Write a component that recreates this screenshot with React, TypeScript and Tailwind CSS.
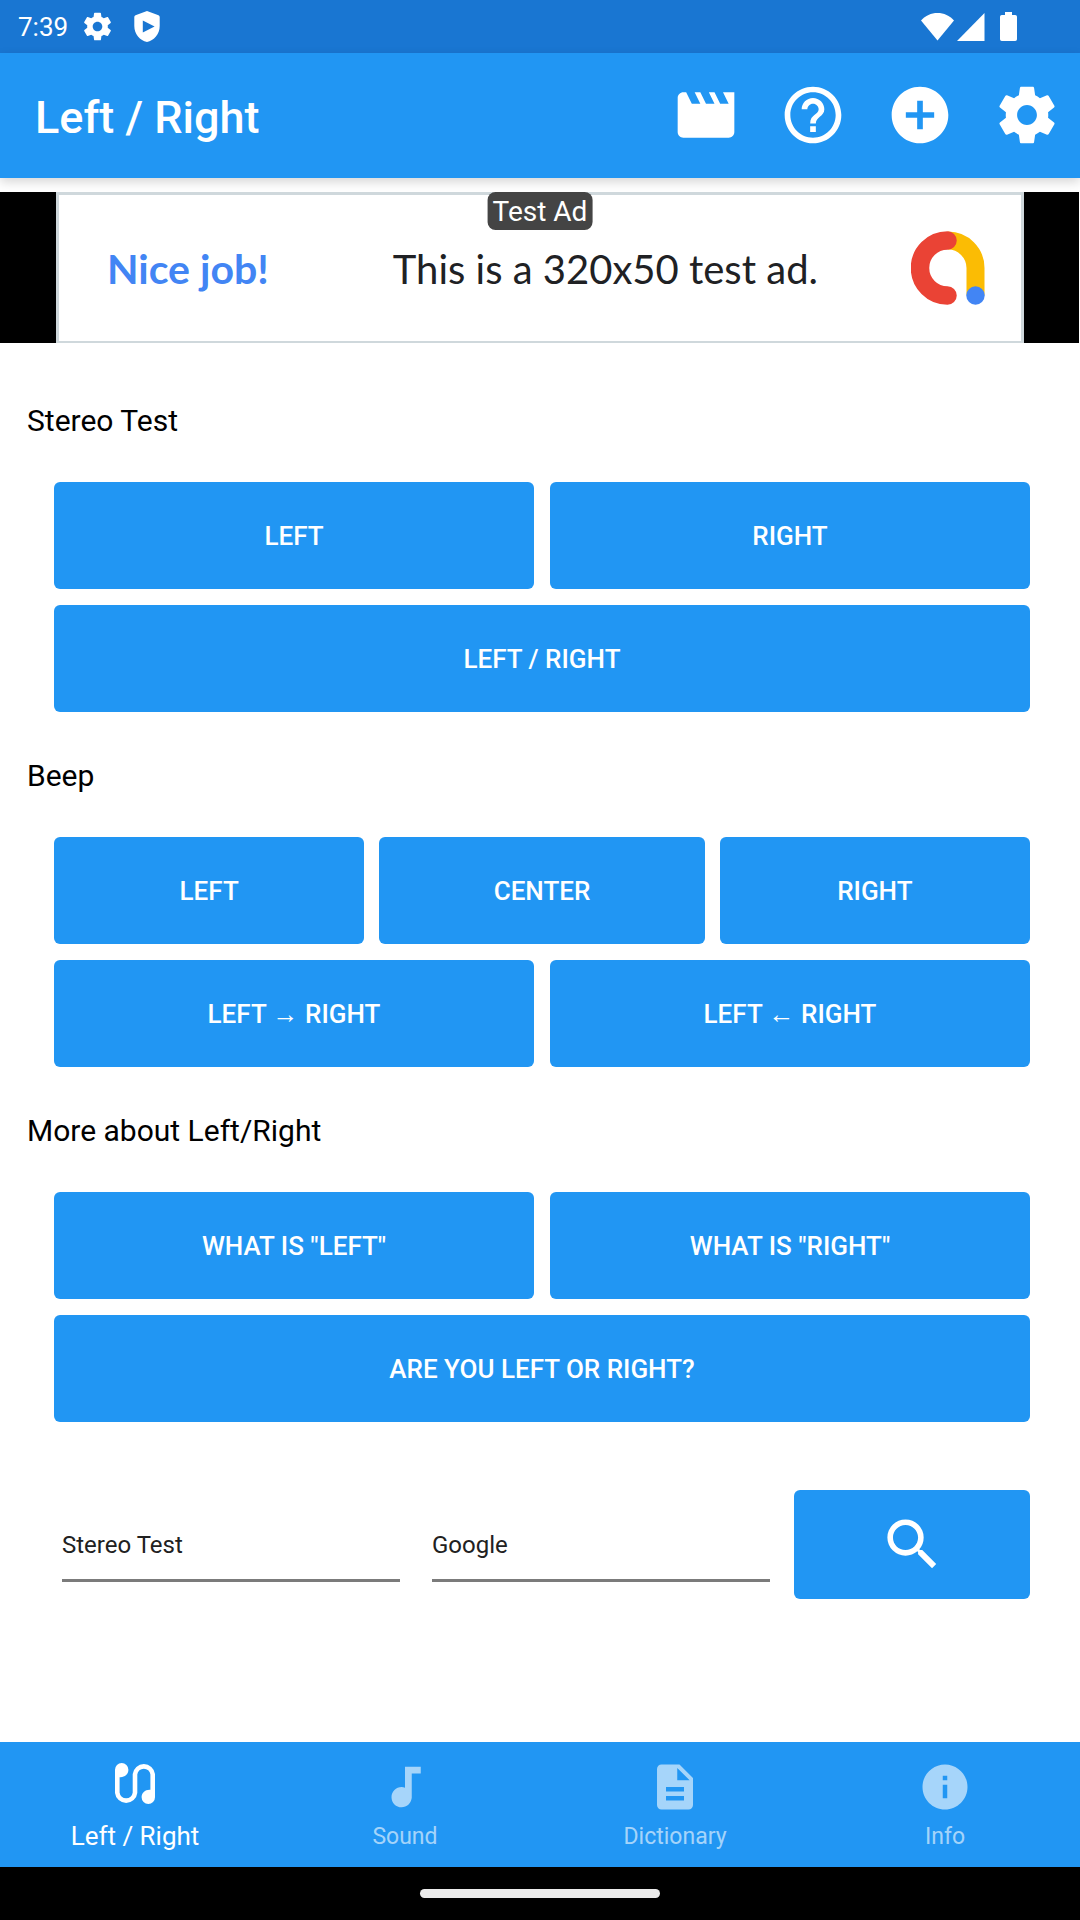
import type { ReactNode } from "react";
import {
  MdAddCircle,
  MdAudiotrack,
  MdDescription,
  MdHelpOutline,
  MdInfo,
  MdMovie,
  MdSearch,
} from "react-icons/md";

function GearIcon({ className }: { className: string }) {
  return (
    <svg viewBox="0 0 24 24" fill="currentColor" className={className} aria-hidden="true">
      <path d="M19.43 12.98c.04-.32.07-.64.07-.98s-.03-.66-.07-.98l2.11-1.65c.19-.15.24-.42.12-.64l-2-3.46c-.12-.22-.39-.3-.61-.22l-2.49 1c-.52-.4-1.08-.73-1.69-.98l-.38-2.65C14.46 2.18 14.25 2 14 2h-4c-.25 0-.46.18-.49.42l-.38 2.65c-.61.25-1.17.59-1.69.98l-2.49-1c-.23-.09-.49 0-.61.22l-2 3.46c-.13.22-.07.49.12.64l2.11 1.65c-.04.32-.07.65-.07.98s.03.66.07.98l-2.11 1.65c-.19.15-.24.42-.12.64l2 3.46c.12.22.39.3.61.22l2.49-1c.52.4 1.08.73 1.69.98l.38 2.65c.03.24.24.42.49.42h4c.25 0 .46-.18.49-.42l.38-2.65c.61-.25 1.17-.59 1.69-.98l2.49 1c.23.09.49 0 .61-.22l2-3.46c.12-.22.07-.49-.12-.64l-2.11-1.65zM12 15.5c-1.93 0-3.5-1.57-3.5-3.5s1.57-3.5 3.5-3.5 3.5 1.57 3.5 3.5-1.57 3.5-3.5 3.5z" />
    </svg>
  );
}

function ShieldPlayIcon() {
  return (
    <svg viewBox="0 0 26 31" fill="currentColor" className="h-[31px] w-[26px]" aria-hidden="true">
      <path
        fillRule="evenodd"
        d="M13 0 L24.5 4.2 Q25.7 4.8 25.7 6 V15 C25.7 23 20 29.500 13 31 C6 29.500 .3 23 .3 15 V6 Q.3 4.800 1.500 4.200 Z M8.800 9.600 V21.400 L20.600 15.500 Z"
      />
    </svg>
  );
}

function WifiIcon() {
  return (
    <svg viewBox="0 0 33 28" fill="currentColor" className="h-7 w-[33px]" aria-hidden="true">
      <path d="M0 7.500 C4.500 2.500 10 0 16.500 0 S28.500 2.500 33 7.500 L16.500 27.500 Z" />
    </svg>
  );
}

function SignalIcon() {
  return (
    <svg viewBox="0 0 28 28" fill="currentColor" className="size-7" aria-hidden="true">
      <path d="M27.500 0 V28 H0 Z" />
    </svg>
  );
}

function BatteryIcon() {
  return (
    <svg viewBox="0 0 17 29" fill="currentColor" className="h-[29px] w-[17px]" aria-hidden="true">
      <path d="M5 0 h7 v3 h3.200 q1.800 0 1.800 1.800 v22.400 q0 1.800 -1.800 1.800 h-13.400 q-1.800 0 -1.800 -1.800 v-22.400 q0 -1.800 1.800 -1.800 h3.200 z" />
    </svg>
  );
}

function EarbudsIcon() {
  return (
    <svg viewBox="0 0 40 41" className="h-[41px] w-10" aria-hidden="true">
      <path
        d="M2.300 7 V29.700 A8.900 8.900 0 0 0 20 29.700 V11.300 A8.900 8.900 0 0 1 37.700 11.300 V34"
        fill="none"
        stroke="currentColor"
        strokeWidth="4.600"
      />
      <path
        d="M0 6.800 A6.700 6.800 0 0 1 13.400 6.800 C13.400 11 10 14.200 5.500 14.200 H0 Z M40 34.200 A6.700 6.800 0 0 1 26.600 34.200 C26.600 30 30 26.800 34.500 26.800 H40 Z"
        fill="currentColor"
      />
    </svg>
  );
}

function AdLogo() {
  return (
    <svg viewBox="0 0 74 74" className="size-[74px]" fill="none" strokeLinecap="round" aria-hidden="true">
      <path d="M37 9.500 A27.500 27.500 0 0 1 64.500 37 V64" stroke="#fbbc04" strokeWidth="18" strokeLinecap="butt" />
      <path d="M36.500 9.500 A27.500 27.500 0 0 0 36.500 64.500" stroke="#ea4335" strokeWidth="18.500" />
      <circle cx="64.500" cy="64.500" r="9.200" fill="#4285f4" />
    </svg>
  );
}

function StatusBar() {
  return (
    <div className="flex h-[53px] items-center justify-between bg-[#1976d2] pr-[63px] pl-[18px] text-white">
      <div className="flex items-center">
        <span className="text-[26px] leading-[30px]">7:39</span>
        <GearIcon className="ml-[13px] size-[33px]" />
        <span className="ml-5">
          <ShieldPlayIcon />
        </span>
      </div>
      <div className="flex items-center">
        <WifiIcon />
        <span className="ml-[3px]">
          <SignalIcon />
        </span>
        <span className="ml-[15px]">
          <BatteryIcon />
        </span>
      </div>
    </div>
  );
}

function AppBar() {
  return (
    <header className="relative flex h-[125px] items-center justify-between bg-[#2196f3] pr-[19px] pb-px pl-[35px] text-white shadow-[0_4px_10px_rgba(0,0,0,0.16)]">
      <h1 className="pt-1.5 text-[45px] leading-[52px] font-medium">Left / Right</h1>
      <div className="flex items-center gap-[39px]">
        <button type="button" aria-label="Video">
          <MdMovie className="size-[68px]" />
        </button>
        <button type="button" aria-label="Help">
          <MdHelpOutline className="size-[68px]" />
        </button>
        <button type="button" aria-label="Add">
          <MdAddCircle className="size-[68px]" />
        </button>
        <button type="button" aria-label="Settings">
          <GearIcon className="size-[68px]" />
        </button>
      </div>
    </header>
  );
}

function AdBanner() {
  return (
    <div className="mt-[14px] mr-px flex h-[151px] justify-center bg-black pr-[55px] pl-14">
      <div className="relative flex flex-1 items-center border-[3px] border-b-2 border-[#cfd8dc] bg-white pr-9 pl-12 font-['Lato',sans-serif] leading-[48px]">
        <span className="pt-0.5 text-[41px] font-bold text-[#4285f4]">Nice job!</span>
        <span className="mr-[93px] ml-auto pt-0.5 text-[40px] text-[#202124]">This is a 320x50 test ad.</span>
        <AdLogo />
        <span className="absolute -top-[3px] left-1/2 -translate-x-1/2 rounded-lg bg-[#444444] px-[5px] pt-0.5 font-['Roboto',sans-serif] text-[28px] leading-9 whitespace-nowrap text-white">
          Test Ad
        </span>
      </div>
    </div>
  );
}

function ActionButton({ children, wide = false }: { children: ReactNode; wide?: boolean }) {
  return (
    <button
      type="button"
      className={
        wide
          ? "col-span-full h-[107px] rounded-md bg-[#2196f3] pt-0.5 text-[26px] font-medium text-white"
          : "h-[107px] rounded-md bg-[#2196f3] pt-0.5 text-[26px] font-medium text-white"
      }
    >
      {children}
    </button>
  );
}

function Section({ title, children }: { title: string; children: ReactNode }) {
  return (
    <section className="pt-[45px]">
      <h2 className="pl-[27px] text-[30px] leading-[38px] text-black">{title}</h2>
      <div className="mt-[42px] flex flex-col gap-4 pr-[50px] pl-[54px]">{children}</div>
    </section>
  );
}

function SearchField({ label, value }: { label: string; value: string }) {
  return (
    <input
      type="text"
      aria-label={label}
      defaultValue={value}
      className="mb-[17px] h-[72px] min-w-0 flex-1 border-b-[3px] border-[#7b7b7b] bg-transparent text-[24px] text-[#212121] outline-none"
    />
  );
}

function NavTab({ label, icon, active = false }: { label: string; icon: ReactNode; active?: boolean }) {
  return (
    <a
      href="#"
      className={
        active
          ? "flex flex-col items-center justify-end pb-[15px] text-[26px] leading-8 text-white"
          : "flex flex-col items-center justify-end pb-[14px] text-[23px] leading-8 text-white/60"
      }
    >
      {icon}
      {label}
    </a>
  );
}

export default function App() {
  return (
    <div className="flex min-h-screen flex-col bg-white font-['Roboto',sans-serif]">
      <StatusBar />
      <AppBar />
      <AdBanner />
      <main className="flex-1 pt-[14px] pb-[60px]">
        <Section title="Stereo Test">
          <div className="grid grid-cols-2 gap-4">
            <ActionButton>LEFT</ActionButton>
            <ActionButton>RIGHT</ActionButton>
            <ActionButton wide>LEFT / RIGHT</ActionButton>
          </div>
        </Section>
        <Section title="Beep">
          <div className="grid grid-cols-[310fr_325fr_310fr] gap-x-[15px]">
            <ActionButton>LEFT</ActionButton>
            <ActionButton>CENTER</ActionButton>
            <ActionButton>RIGHT</ActionButton>
          </div>
          <div className="grid grid-cols-2 gap-4">
            <ActionButton>LEFT → RIGHT</ActionButton>
            <ActionButton>LEFT ← RIGHT</ActionButton>
          </div>
        </Section>
        <Section title="More about Left/Right">
          <div className="grid grid-cols-2 gap-4">
            <ActionButton>WHAT IS "LEFT"</ActionButton>
            <ActionButton>WHAT IS "RIGHT"</ActionButton>
            <ActionButton wide>ARE YOU LEFT OR RIGHT?</ActionButton>
          </div>
        </Section>
        <form className="mt-[68px] flex items-end pr-[50px] pl-[62px]" onSubmit={(e) => e.preventDefault()}>
          <div className="flex flex-1 gap-8">
            <SearchField label="Search text" value="Stereo Test" />
            <SearchField label="Search engine" value="Google" />
          </div>
          <button
            type="submit"
            aria-label="Search"
            className="ml-6 flex h-[109px] w-[236px] items-center justify-center rounded-md bg-[#2196f3] text-white"
          >
            <MdSearch className="size-[67px]" />
          </button>
        </form>
      </main>
      <nav className="grid h-[125px] grid-cols-4 bg-[#2196f3]">
        <NavTab
          active
          label="Left / Right"
          icon={
            <span className="mb-4">
              <EarbudsIcon />
            </span>
          }
        />
        <NavTab label="Sound" icon={<MdAudiotrack className="mb-[7px] size-[54px]" />} />
        <NavTab label="Dictionary" icon={<MdDescription className="mb-[7px] size-[54px]" />} />
        <NavTab label="Info" icon={<MdInfo className="mb-[7px] size-[54px]" />} />
      </nav>
      <div className="flex h-[53px] items-center justify-center bg-black">
        <div className="h-[9px] w-60 rounded-full bg-[#ebebeb]" />
      </div>
    </div>
  );
}
